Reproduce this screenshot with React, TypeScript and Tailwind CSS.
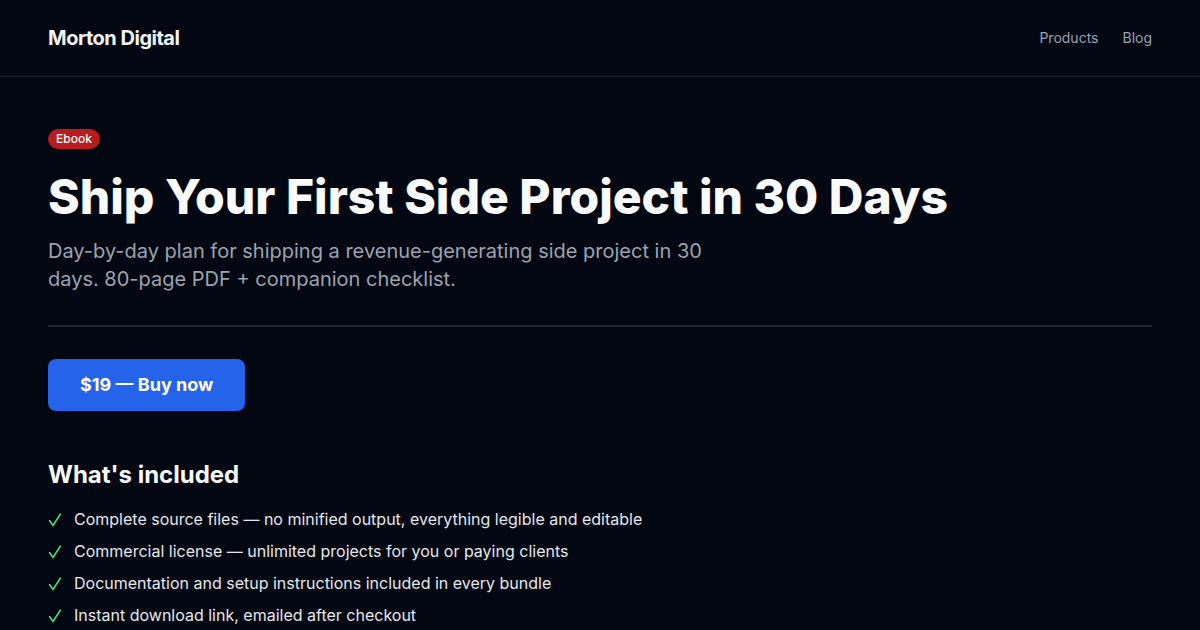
const features = [
  "Complete source files — no minified output, everything legible and editable",
  "Commercial license — unlimited projects for you or paying clients",
  "Documentation and setup instructions included in every bundle",
  "Instant download link, emailed after checkout",
];

const Check = () => (
  <svg
    width="14"
    height="14"
    viewBox="0 0 14 14"
    fill="none"
    stroke="#4ade80"
    strokeWidth="1.5"
    strokeLinecap="round"
    strokeLinejoin="round"
    className="mt-[6px] shrink-0"
  >
    <path d="M1.5 7.5 L5 12.5 L12.5 1" />
  </svg>
);

const App = () => {
  return (
    <div
      className="min-h-screen bg-[#030712] text-gray-100"
      style={{ fontFamily: "Inter, 'Noto Sans', sans-serif" }}
    >
      <header className="border-b border-[#1a1d27]">
        <div className="flex h-[76px] items-center justify-between px-12">
          <span className="text-xl font-bold tracking-tight text-[#f3f4f6]">
            Morton Digital
          </span>
          <nav className="flex gap-6 text-sm text-[#9ca3af]">
            <a href="#">Products</a>
            <a href="#">Blog</a>
          </nav>
        </div>
      </header>

      <main className="px-12 pt-12">
        <span className="inline-block rounded-full bg-[#b91c1c] px-2 py-0.5 text-xs font-medium text-white">
          Ebook
        </span>
        <h1 className="mt-6 text-5xl leading-none font-extrabold text-[#f9fafb]">
          Ship Your First Side Project in 30 Days
        </h1>
        <p className="mt-4 max-w-2xl text-xl text-[#9ca3af]">
          Day-by-day plan for shipping a revenue-generating side project in 30
          days. 80-page PDF + companion checklist.
        </p>

        <hr className="mt-8 border-t-2 border-[#23262f]" />

        <button className="mt-8 rounded-lg bg-[#2563eb] px-8 py-3 text-lg font-bold text-white">
          $19 — Buy now
        </button>

        <h2 className="mt-12 text-2xl font-bold text-[#f9fafb]">
          What's included
        </h2>
        <ul className="mt-4 space-y-2">
          {features.map((f) => (
            <li key={f} className="flex gap-3 text-base text-[#e5e7eb]">
              <Check />
              <span>{f}</span>
            </li>
          ))}
        </ul>
      </main>
    </div>
  );
};

export default App;
